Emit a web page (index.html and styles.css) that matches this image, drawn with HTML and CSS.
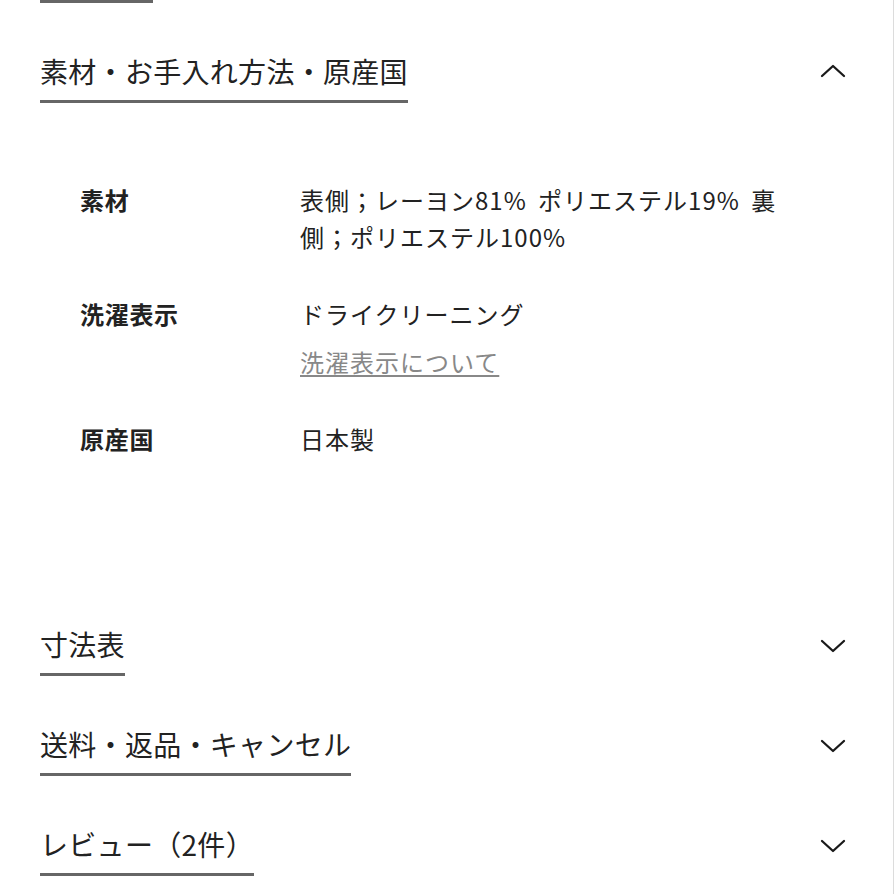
FILE: index.html
```html
<!DOCTYPE html>
<html lang="ja">

<head>
    <meta charset="UTF-8">
    <meta name="viewport" content="width=device-width, initial-scale=1.0">
    <title>商品詳細</title>
    <link rel="stylesheet" href="styles.css">
</head>

<body>
    <div class="page">
        <div class="prev-line"></div>

        <section class="acc open">
            <div class="acc-head">
                <span class="acc-title">素材・お手入れ方法・原産国</span>
                <svg class="chev" width="40" height="40" viewBox="0 0 40 40">
                    <polyline points="9,25 20,15 31,25" />
                </svg>
            </div>
            <dl class="acc-body">
                <dt>素材</dt>
                <dd>表側；レーヨン81% ポリエステル19% 裏側；ポリエステル100%</dd>
                <dt>洗濯表示</dt>
                <dd>ドライクリーニング<a class="care-link" href="#">洗濯表示について</a></dd>
                <dt>原産国</dt>
                <dd>日本製</dd>
            </dl>
        </section>

        <section class="acc">
            <div class="acc-head">
                <span class="acc-title">寸法表</span>
                <svg class="chev" width="40" height="40" viewBox="0 0 40 40">
                    <polyline points="9,17 20,27 31,17" />
                </svg>
            </div>
        </section>

        <section class="acc">
            <div class="acc-head">
                <span class="acc-title">送料・返品・キャンセル</span>
                <svg class="chev" width="40" height="40" viewBox="0 0 40 40">
                    <polyline points="9,17 20,27 31,17" />
                </svg>
            </div>
        </section>

        <section class="acc">
            <div class="acc-head">
                <span class="acc-title">レビュー（2件）</span>
                <svg class="chev" width="40" height="40" viewBox="0 0 40 40">
                    <polyline points="9,17 20,27 31,17" />
                </svg>
            </div>
        </section>
    </div>
</body>

</html>
```

FILE: styles.css
```css
body {
    margin: 0;
    background-color: #fff;
    color: #222;
    font-family: "Noto Sans CJK JP", "Noto Sans", sans-serif;
}

.page {
    box-sizing: border-box;
    min-height: 894px;
    padding: 0 40px;
    border-right: 1px solid #dcdcdc;
}

.prev-line {
    width: 113px;
    height: 3px;
    background-color: #666;
}

.acc-head {
    display: flex;
    justify-content: space-between;
    align-items: flex-start;
    padding-top: 48px;
}

.acc-title {
    font-size: 28px;
    line-height: 40px;
    letter-spacing: 0.3px;
    padding-bottom: 9px;
    border-bottom: 3px solid #666;
}

.chev {
    display: block;
}

.chev polyline {
    fill: none;
    stroke: #1a1a1a;
    stroke-width: 2.3;
    stroke-linecap: round;
    stroke-linejoin: round;
}

.acc-body {
    display: grid;
    grid-template-columns: 220px 510px;
    row-gap: 40px;
    margin: 0;
    padding: 78px 0 119px 40px;
    font-size: 24px;
    line-height: 37px;
}

.acc-body dt {
    font-weight: 700;
    letter-spacing: 0.7px;
}

.acc-body dd {
    margin: 0;
    letter-spacing: 1px;
    word-spacing: 5px;
}

.care-link {
    display: block;
    margin-top: 11px;
    color: #888;
    text-decoration: underline;
    text-underline-offset: 3px;
}
```
